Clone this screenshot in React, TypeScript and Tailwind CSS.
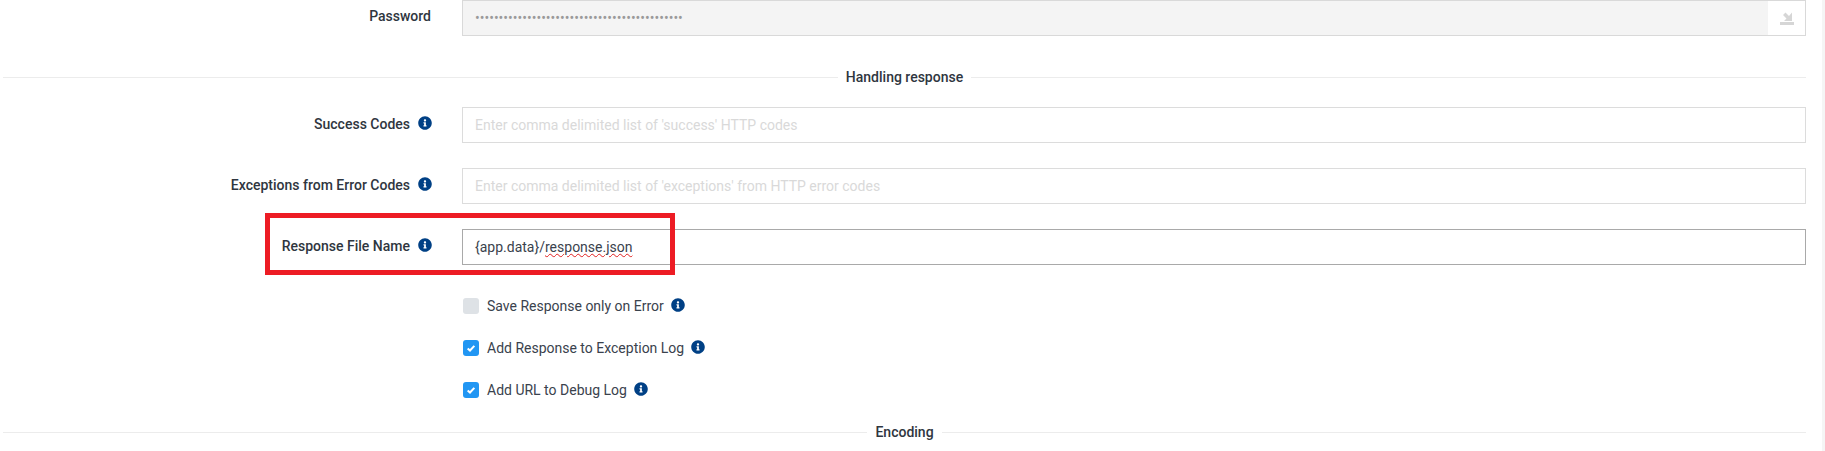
import { FaInfoCircle } from "react-icons/fa";

function Info({ className = "" }: { className?: string }) {
  return <FaInfoCircle className={`w-[14px] h-[14px] text-[#004085] shrink-0 ${className}`} />;
}

function Row({ label, info = true, children }: { label: string; info?: boolean; children: React.ReactNode }) {
  return (
    <div className="flex items-start h-[36px]">
      <div className="w-[431px] flex justify-end items-center gap-[8px] h-[32px] font-medium text-[14px] text-[#2f3640]">
        <span className={info ? "pt-[2px]" : ""}>{label}</span>
        {info && <Info className="mr-[-1px]" />}
      </div>
      <div className="ml-[31px] flex-1">{children}</div>
    </div>
  );
}

function Field({ placeholder }: { placeholder: string }) {
  return (
    <div className="h-[36px] border border-[#dcdcdc] bg-white flex items-center px-[12px] text-[14px] text-[#d9d9d9]">
      {placeholder}
    </div>
  );
}

function Section({ title, className = "" }: { title: string; className?: string }) {
  return (
    <div className={`flex items-center h-[20px] ml-[3px] ${className}`}>
      <div className="flex-1 h-px bg-[#ececec]" />
      <div className="px-[8px] font-medium text-[14px] text-[#2f3640]">{title}</div>
      <div className="flex-1 h-px bg-[#ececec]" />
    </div>
  );
}

function Check({ label, checked, className = "" }: { label: string; checked: boolean; className?: string }) {
  return (
    <div className={`flex items-center h-[16px] ml-[463px] text-[14px] text-[#3a424d] ${className}`}>
      <div className={`w-[16px] h-[16px] rounded-[3px] flex items-center justify-center ${checked ? "bg-[#2196f3]" : "bg-[#dee2e6]"}`}>
        {checked && (
          <svg viewBox="0 0 12 12" className="w-[10px] h-[10px]">
            <path d="M2 6.5 L4.8 9 L10 3.5" fill="none" stroke="#fff" strokeWidth="2.4" />
          </svg>
        )}
      </div>
      <span className="ml-[8px]">{label}</span>
      <Info className="ml-[7px] mb-[2px]" />
    </div>
  );
}

export default function App() {
  return (
    <div className="relative w-[1825px] h-[451px] overflow-hidden bg-white font-['Roboto',sans-serif]">
      <div className="w-[1806px]">
        <Row label="Password" info={false}>
          <div className="h-[36px] border border-[#d9d9d9] flex">
            <div className="flex-1 bg-[#f4f4f4] flex items-center pl-[12px] text-[#9a9a9a]">
              <span className="text-[14px]">{"•".repeat(44)}</span>
            </div>
            <div className="w-[37px] flex items-center justify-center">
              <svg viewBox="0 0 14 14" className="w-[14px] h-[14px]">
                <path d="M0 11 H14 V14 H0 Z" fill="#d6d6d6" />
                <path d="M12 1.5 V10 H4 L6.5 7.5 L3 4 L5.5 1.5 L9 5 Z" fill="#d6d6d6" />
              </svg>
            </div>
          </div>
        </Row>
        <Section title="Handling response" className="mt-[31px] mb-[20px]" />
        <div className="flex flex-col gap-[25px]">
          <Row label="Success Codes">
            <Field placeholder="Enter comma delimited list of 'success' HTTP codes" />
          </Row>
          <Row label="Exceptions from Error Codes">
            <Field placeholder="Enter comma delimited list of 'exceptions' from HTTP error codes" />
          </Row>
          <Row label="Response File Name">
            <div className="h-[36px] border border-[#a9a9a9] bg-white flex items-center px-[12px] text-[14px] text-[#3a424d]">
              <span>{"{app.data}/"}</span>
              <span className="underline decoration-wavy decoration-[#e02020] decoration-1">response.json</span>
            </div>
          </Row>
        </div>
        <div className="mt-[33px] flex flex-col gap-[26px]">
          <Check label="Save Response only on Error" checked={false} />
          <Check label="Add Response to Exception Log" checked />
          <Check label="Add URL to Debug Log" checked />
        </div>
        <Section title="Encoding" className="mt-[24px]" />
      </div>
      <div className="absolute left-[265px] top-[213px] w-[410px] h-[62px] border-[5px] border-[#ed1c24]" />
      <div className="absolute right-0 top-0 bottom-0 w-[3px] bg-[#f5f5f5]" />
    </div>
  );
}
